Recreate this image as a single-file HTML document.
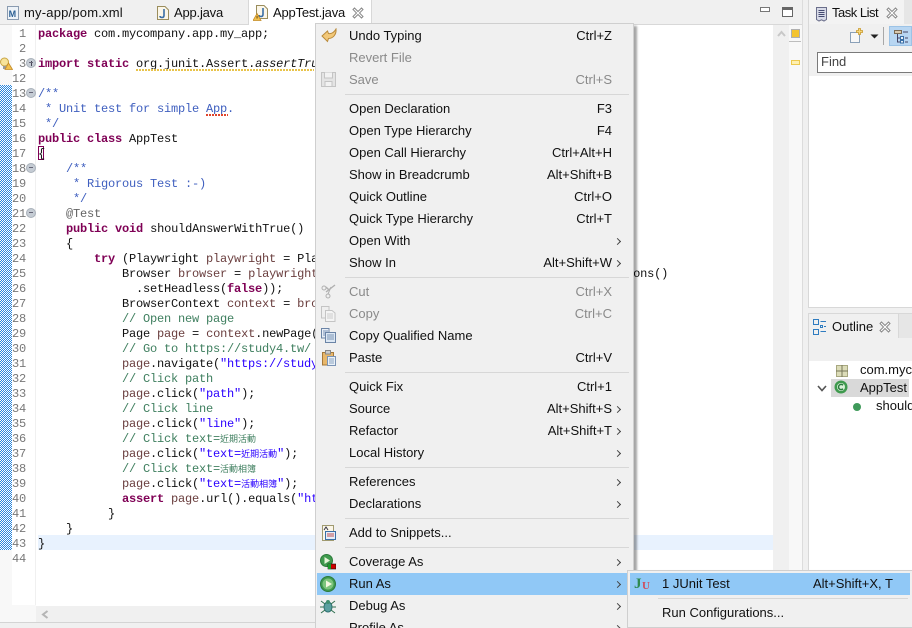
<!DOCTYPE html>
<html><head><meta charset="utf-8"><style>
html,body{margin:0;padding:0;width:912px;height:628px;overflow:hidden}
body{background:#f0f0f0;font-family:"Liberation Sans","Noto Sans CJK TC",sans-serif;font-size:13px;color:#111}
#root{position:absolute;left:0;top:0;width:912px;height:628px;overflow:hidden;background:#f0f0f0}
div,span.a,svg,i{position:absolute}
.t{position:absolute;white-space:pre;line-height:20px;height:20px}
#code{position:absolute;left:38px;top:27px;font:12px/15px "Liberation Mono","Noto Sans CJK TC",monospace;letter-spacing:-.2px;color:#111;white-space:pre;margin:0}
#nums{position:absolute;left:0;top:27px;width:26px;text-align:right;font:12px/15px "Liberation Mono",monospace;letter-spacing:-.2px;color:#787878;white-space:pre;margin:0}
b{color:#7f0055;font-weight:bold}
.j{color:#3f5fbf}.c{color:#3f7f5f}.s{color:#2a00ff}.v{color:#6a3e3e}.n{color:#646464}
.cjk{font-size:9px;letter-spacing:0;line-height:0}
.m{position:absolute;left:349px;line-height:22px;height:22px;white-space:pre}
.k{position:absolute;right:300px;line-height:22px;height:22px;white-space:pre}
.d{color:#8a8a8a}
.sep{position:absolute;left:345px;width:284px;height:1px;background:#d7d7d7}
i{width:4px;height:4px;left:615px;border-top:1px solid #444;border-right:1px solid #444;transform:rotate(45deg)}
.fold{width:8px;height:8px;left:26px;border-radius:50%;background:#c5ccd4;border:1px solid #a9b1ba}
.fold:after{content:"";position:absolute;left:2px;top:3px;width:4px;height:1px;background:#667}
</style></head><body><div id="root">

<!-- editor -->
<div style="left:0;top:0;width:802px;height:24px;background:#f0f0f0"></div>
<div style="left:248px;top:0;width:124px;height:25px;background:#fff;border-left:1px solid #d8d8d8;border-right:1px solid #d8d8d8;box-sizing:border-box"></div>
<div style="left:0;top:24px;width:248px;height:1px;background:#d8d8d8"></div>
<div style="left:372px;top:24px;width:430px;height:1px;background:#d8d8d8"></div>
<div style="left:0;top:25px;width:802px;height:581px;background:#fff"></div>
<div style="left:0;top:25px;width:12px;height:581px;background:#f8f8f8"></div>
<div style="left:35px;top:25px;width:1px;height:581px;background:#f0f0f0"></div>
<div style="left:0;top:605px;width:36px;height:17px;background:#f8f8f8"></div>
<svg style="left:0;top:85px;background:#fff" width="12" height="465" shape-rendering="crispEdges" stroke="#2a86dc" stroke-width="1" stroke-dasharray="1 1"><path d="M.5 0V465M2.5 0V465M4.5 0V465M6.5 0V465M8.5 0V465M10.5 0V465"/><path stroke-dashoffset="1" d="M1.5 0V465M3.5 0V465M5.5 0V465M7.5 0V465M9.5 0V465M11.5 0V465"/></svg>
<div style="left:38px;top:535px;width:735px;height:15px;background:#e8f2fe"></div>
<div style="left:38px;top:146px;width:6px;height:14px;border:1px solid #7f0055;box-sizing:border-box"></div>

<pre id="nums">1
2
3
12
13
14
15
16
17
18
19
20
21
22
23
24
25
26
27
28
29
30
31
32
33
34
35
36
37
38
39
40
41
42
43
44</pre>

<pre id="code"><b>package</b> com.mycompany.app.my_app;

<b>import</b> <b>static</b> org.junit.Assert.<em>assertTrue</em>;

<span class="j">/**</span>
<span class="j"> * Unit test for simple App.</span>
<span class="j"> */</span>
<b>public</b> <b>class</b> AppTest
{
    <span class="j">/**</span>
<span class="j">     * Rigorous Test :-)</span>
<span class="j">     */</span>
    <span class="n">@Test</span>
    <b>public</b> <b>void</b> shouldAnswerWithTrue()
    {
        <b>try</b> (Playwright <span class="v">playwright</span> = Playwright.create()) {
            Browser <span class="v">browser</span> = <span class="v">playwright</span>.chromium().launch(new BrowserType.LaunchOptions()
              .setHeadless(<b>false</b>));
            BrowserContext <span class="v">context</span> = <span class="v">browser</span>.newContext();
            <span class="c">// Open new page</span>
            Page <span class="v">page</span> = <span class="v">context</span>.newPage();
            <span class="c">// Go to https://study4.tw/</span>
            <span class="v">page</span>.navigate(<span class="s">"https://study4.tw/"</span>);
            <span class="c">// Click path</span>
            <span class="v">page</span>.click(<span class="s">"path"</span>);
            <span class="c">// Click line</span>
            <span class="v">page</span>.click(<span class="s">"line"</span>);
            <span class="c">// Click text=<span class="cjk">近期活動</span></span>
            <span class="v">page</span>.click(<span class="s">"text=<span class="cjk">近期活動</span>"</span>);
            <span class="c">// Click text=<span class="cjk">活動相簿</span></span>
            <span class="v">page</span>.click(<span class="s">"text=<span class="cjk">活動相簿</span>"</span>);
            <b>assert</b> <span class="v">page</span>.url().equals(<span class="s">"https://study4.tw/"</span>);
          }
    }
}
</pre>

<div class="fold" style="top:88px"></div>
<div class="fold" style="top:163px"></div>
<div class="fold" style="top:208px"></div>
<div class="fold" style="top:58px"><span style="position:absolute;left:3.5px;top:1.5px;width:1px;height:5px;background:#445"></span></div>

<!-- squiggles -->
<div style="left:136px;top:69px;width:178px;height:2px;background:repeating-linear-gradient(90deg,#e8c34a 0 2px,#fff 2px 3px)"></div>
<div style="left:206px;top:114px;width:22px;height:2px;background:repeating-linear-gradient(90deg,#e0452c 0 2px,#fff 2px 3px)"></div>

<!-- lightbulb marker -->
<svg style="left:0;top:57px" width="13" height="13" viewBox="0 0 13 13"><circle cx="4.5" cy="5" r="4" fill="#f7e39a" stroke="#c9a544"/><rect x="3" y="9" width="3" height="3" fill="#999"/><path d="M8.5 6 L12.5 12.5 H5 Z" fill="#f2c14e" stroke="#c48a25" stroke-width=".8"/></svg>

<!-- tabs -->
<svg style="left:7px;top:6px" width="12" height="14" viewBox="0 0 12 14"><path d="M.5.5H11.5V13.5H.5Z" fill="#eef3f8" stroke="#8a9bb0"/><text x="1.6" y="11" font-size="9" font-weight="bold" font-family="Liberation Sans" fill="#2b5f93">M</text></svg>
<div class="t" style="left:24px;top:3px;letter-spacing:.2px">my-app/pom.xml</div>
<svg style="left:157px;top:6px" width="12" height="14" viewBox="0 0 12 14"><path d="M.5.5H8L11.5 4V13.5H.5Z" fill="#fbf6e8" stroke="#9a8d5c"/><path d="M7 3V9.5Q7 11.5 5 11.5T3 10" fill="none" stroke="#3a6ea5" stroke-width="1.6"/></svg>
<div class="t" style="left:174px;top:3px;letter-spacing:-.2px">App.java</div>
<svg style="left:253px;top:5px" width="15" height="16" viewBox="0 0 15 16"><path d="M3.5.5H11L14.5 4V13.5H3.5Z" fill="#fbf6e8" stroke="#9a8d5c"/><path d="M10 3V9.5Q10 11.5 8 11.5T6 10" fill="none" stroke="#3a6ea5" stroke-width="1.6"/><path d="M4 8.5L8 15.5H0Z" fill="#f2c14e" stroke="#c48a25" stroke-width=".8"/><rect x="3.6" y="11" width=".9" height="2.5" fill="#5a3c00"/></svg>
<div class="t" style="left:273px;top:3px;letter-spacing:-.2px">AppTest.java</div>
<svg style="left:352px;top:7px" width="12" height="12" viewBox="0 0 12 12"><path d="M1 2.5L2.5 1L6 4.5L9.5 1L11 2.5L7.5 6L11 9.5L9.5 11L6 7.5L2.5 11L1 9.5L4.5 6Z" fill="#fff" stroke="#8a8a8a"/></svg>

<!-- window buttons -->
<div style="left:760px;top:7px;width:8px;height:3px;border:1px solid #777;background:#fff"></div>
<div style="left:782px;top:7px;width:9px;height:6px;border:1px solid #666;border-top-width:3px;background:#fff"></div>

<!-- editor scrollbars -->
<div style="left:773px;top:25px;width:16px;height:581px;background:#f0f0f0"></div>
<svg style="left:777px;top:30px" width="9" height="7" viewBox="0 0 9 7"><path d="M1 6L4.5 2L8 6" fill="none" stroke="#c8c8c8" stroke-width="2"/></svg>
<div style="left:789px;top:25px;width:13px;height:581px;background:#f8f8f8"></div>
<div style="left:791px;top:29px;width:7px;height:7px;background:#f4c430;border:1px solid #b0b0b0"></div>
<div style="left:789px;top:41px;width:12px;height:1px;background:#bdbdbd"></div>
<div style="left:791px;top:60px;width:7px;height:3px;background:#fff0b0;border:1px solid #ecc94f"></div>
<div style="left:36px;top:606px;width:766px;height:16px;background:#f0f0f0"></div>
<svg style="left:41px;top:610px" width="8" height="9" viewBox="0 0 8 9"><path d="M6.5 1L2 4.5L6.5 8" fill="none" stroke="#b5b5b5" stroke-width="2"/></svg>
<div style="left:0;top:622px;width:802px;height:1px;background:#d4d4d4"></div>
<div style="left:802px;top:0;width:1px;height:628px;background:#dcdcdc"></div>

<!-- right: task list -->
<div style="left:808px;top:0;width:104px;height:308px;background:#f0f0f0;border-left:1px solid #d8d8d8;border-bottom:1px solid #d8d8d8;box-sizing:border-box"></div>
<div style="left:809px;top:0;width:95px;height:24px;background:#f3f3f3"></div>
<div style="left:904px;top:0;width:8px;height:24px;background:#e6e6e6"></div>
<div style="left:809px;top:76px;width:103px;height:231px;background:#fff"></div>
<svg style="left:815px;top:6px" width="13" height="16" viewBox="0 0 13 16"><path d="M1.5 1.5H11.5V13.5L9 15L6.5 13.8L4 15L1.5 13.5Z" fill="#d8dbe8" stroke="#6a6e8a"/><path d="M3.5 4.5H9.5M3.5 6.5H9.5M3.5 8.5H9.5M3.5 10.5H9.5" stroke="#444a70"/></svg>
<div class="t" style="left:832px;top:3px;letter-spacing:-.5px">Task List</div>
<svg style="left:886px;top:7px" width="12" height="12" viewBox="0 0 12 12"><path d="M1 2.5L2.5 1L6 4.5L9.5 1L11 2.5L7.5 6L11 9.5L9.5 11L6 7.5L2.5 11L1 9.5L4.5 6Z" fill="#fff" stroke="#8a8a8a"/></svg>
<svg style="left:849px;top:28px" width="15" height="16" viewBox="0 0 15 16"><path d="M1.5 4.5H10.5V14.5H1.5Z" fill="#f7f7f7" stroke="#8aa0b8"/><path d="M9.5 0.5h2v2h2v2h-2v2h-2v-2h-2v-2h2Z" fill="#f6d77a" stroke="#c99a2e" stroke-width=".8"/></svg>
<svg style="left:870px;top:34px" width="9" height="5" viewBox="0 0 9 5"><path d="M.5.5H8.5L4.5 4.5Z" fill="#222"/></svg>
<div style="left:883px;top:27px;width:1px;height:18px;background:#a8a8a8"></div>
<div style="left:889px;top:26px;width:23px;height:20px;background:#b8d6f2;border:1px solid #9cc3e6;box-sizing:border-box"></div>
<svg style="left:893px;top:28px" width="16" height="16" viewBox="0 0 16 16"><path d="M1.5 2.5H8.5V5.5H1.5Z" fill="#d9c9b0" stroke="#7a6a55"/><path d="M4.5 6V14H7M4.5 10H7" fill="none" stroke="#446"/><path d="M7.5 8.5H10.5V11.5H7.5ZM7.5 12.5H10.5V15H7.5Z" fill="#e8f0f8" stroke="#3a6ea5"/><path d="M10 4H15M12 10H15M12 14H15" stroke="#446"/></svg>
<div style="left:817px;top:52px;width:96px;height:21px;background:#fff;border:1px solid #7a7a7a;box-sizing:border-box"></div>
<div class="t" style="left:821px;top:52px;color:#444">Find</div>

<!-- right: outline -->
<div style="left:808px;top:313px;width:104px;height:315px;background:#f0f0f0;border-left:1px solid #d8d8d8;border-top:1px solid #d8d8d8;box-sizing:border-box"></div>
<div style="left:898px;top:314px;width:14px;height:24px;background:#e6e6e6;border-left:1px solid #d8d8d8"></div>
<div style="left:809px;top:361px;width:103px;height:267px;background:#fff"></div>
<svg style="left:813px;top:319px" width="14" height="16" viewBox="0 0 14 16"><path d="M.5.5H5.5V5.5H.5ZM.5 10.5H5.5V15.5H.5ZM7.5 6.5H9.5V8.5H7.5ZM7.5 2.5H13M11 7.5H13M7.5 12.5H13" fill="none" stroke="#2f7cc0"/></svg>
<div class="t" style="left:832px;top:317px">Outline</div>
<svg style="left:879px;top:321px" width="12" height="12" viewBox="0 0 12 12"><path d="M1 2.5L2.5 1L6 4.5L9.5 1L11 2.5L7.5 6L11 9.5L9.5 11L6 7.5L2.5 11L1 9.5L4.5 6Z" fill="#fff" stroke="#8a8a8a"/></svg>
<svg style="left:836px;top:365px" width="12" height="12" viewBox="0 0 12 12"><rect x=".5" y=".5" width="11" height="11" fill="#dcdcb8" stroke="#a8a880"/><path d="M6 0V12M0 6H12" stroke="#77775a"/></svg>
<div class="t" style="left:860px;top:360px">com.mycompany.app.my_app</div>
<div style="left:831px;top:379px;width:78px;height:18px;background:#d9d9d9"></div>
<svg style="left:817px;top:385px" width="10" height="7" viewBox="0 0 10 7"><path d="M1 1L5 5.5L9 1" fill="none" stroke="#555" stroke-width="1.6"/></svg>
<svg style="left:834px;top:380px" width="14" height="14" viewBox="0 0 14 14"><circle cx="7" cy="7" r="6.5" fill="#3f9a4e"/><circle cx="7" cy="7" r="4" fill="#d8f0d8"/><path d="M9 5.2A2.6 2.6 0 1 0 9 8.8" fill="none" stroke="#2a7a3c" stroke-width="1.5"/></svg>
<div class="t" style="left:860px;top:378px">AppTest</div>
<div style="left:853px;top:403px;width:8px;height:8px;border-radius:50%;background:#3f9a5a;border:0"></div>
<div class="t" style="left:876px;top:396px">shouldAnswerWithTrue()</div>

<!-- context menu -->
<div style="left:315px;top:23px;width:319px;height:620px;background:#f0f0f0;border:1px solid #cfcfcf;box-sizing:border-box;box-shadow:3px 3px 2px rgba(0,0,0,.35)"></div>
<div style="left:317px;top:573px;width:310px;height:22px;background:#90c8f6"></div>

<div class="sep" style="top:94px"></div>
<div class="sep" style="top:277px"></div>
<div class="sep" style="top:372px"></div>
<div class="sep" style="top:467px"></div>
<div class="sep" style="top:518px"></div>
<div class="sep" style="top:547px"></div>

<span class="m" style="top:25px">Undo Typing</span><span class="k" style="top:25px">Ctrl+Z</span>
<span class="m d" style="top:47px">Revert File</span>
<span class="m d" style="top:69px">Save</span><span class="k d" style="top:69px">Ctrl+S</span>
<span class="m" style="top:98px">Open Declaration</span><span class="k" style="top:98px">F3</span>
<span class="m" style="top:120px">Open Type Hierarchy</span><span class="k" style="top:120px">F4</span>
<span class="m" style="top:142px">Open Call Hierarchy</span><span class="k" style="top:142px">Ctrl+Alt+H</span>
<span class="m" style="top:164px">Show in Breadcrumb</span><span class="k" style="top:164px">Alt+Shift+B</span>
<span class="m" style="top:186px">Quick Outline</span><span class="k" style="top:186px">Ctrl+O</span>
<span class="m" style="top:208px">Quick Type Hierarchy</span><span class="k" style="top:208px">Ctrl+T</span>
<span class="m" style="top:230px">Open With</span>
<span class="m" style="top:252px">Show In</span><span class="k" style="top:252px">Alt+Shift+W</span>
<span class="m d" style="top:281px">Cut</span><span class="k d" style="top:281px">Ctrl+X</span>
<span class="m d" style="top:303px">Copy</span><span class="k d" style="top:303px">Ctrl+C</span>
<span class="m" style="top:325px">Copy Qualified Name</span>
<span class="m" style="top:347px">Paste</span><span class="k" style="top:347px">Ctrl+V</span>
<span class="m" style="top:376px">Quick Fix</span><span class="k" style="top:376px">Ctrl+1</span>
<span class="m" style="top:398px">Source</span><span class="k" style="top:398px">Alt+Shift+S</span>
<span class="m" style="top:420px">Refactor</span><span class="k" style="top:420px">Alt+Shift+T</span>
<span class="m" style="top:442px">Local History</span>
<span class="m" style="top:471px">References</span>
<span class="m" style="top:493px">Declarations</span>
<span class="m" style="top:522px">Add to Snippets...</span>
<span class="m" style="top:551px">Coverage As</span>
<span class="m" style="top:573px">Run As</span>
<span class="m" style="top:595px">Debug As</span>
<span class="m" style="top:617px">Profile As</span>

<i style="top:239px"></i><i style="top:261px"></i><i style="top:407px"></i><i style="top:429px"></i><i style="top:451px"></i><i style="top:480px"></i><i style="top:502px"></i><i style="top:560px"></i><i style="top:582px"></i><i style="top:604px"></i><i style="top:626px"></i>

<!-- menu icons -->
<svg style="left:321px;top:28px" width="16" height="15" viewBox="0 0 16 15"><path d="M15 1C15.5 6 12.5 10.5 7.5 10.5L6.5 13.5L1 8L6.5 3L7.5 5.5C10.5 6 13 4.5 15 1Z" fill="#f2c879" stroke="#b98a3a"/></svg>
<svg style="left:321px;top:72px" width="15" height="15" viewBox="0 0 15 15"><path d="M.5.5H14.5V14.5H.5Z" fill="#e4e4e4" stroke="#c4c4c4"/><path d="M3.5.5V6H11.5V.5M4 14V9.5H11V14" fill="#f2f2f2" stroke="#c4c4c4"/></svg>
<svg style="left:321px;top:284px" width="15" height="15" viewBox="0 0 15 15"><path d="M14 1L5 8M8 6L5 3" stroke="#b0b0b0" stroke-width="1.4" fill="none"/><circle cx="3" cy="4" r="2" fill="none" stroke="#b0b0b0"/><circle cx="7" cy="12" r="2" fill="none" stroke="#b0b0b0"/><path d="M7 10L10 3" stroke="#b0b0b0"/></svg>
<svg style="left:321px;top:306px" width="15" height="16" viewBox="0 0 15 16"><path d="M.5.5H8V12H.5Z" fill="#efefef" stroke="#c4c4c4"/><path d="M4.5 4.5H11L14 7V15.5H4.5Z" fill="#f4f4f4" stroke="#c4c4c4"/><path d="M6 8H12M6 10H12M6 12H12" stroke="#ccc"/></svg>
<svg style="left:321px;top:328px" width="15" height="15" viewBox="0 0 15 15"><path d="M.5.5H8V10H.5Z" fill="#e8eef6" stroke="#6b84a6"/><path d="M2 3H7M2 5H7M2 7H7" stroke="#7a93b5"/><path d="M4.5 4.5H14.5V14.5H4.5Z" fill="#dde8f4" stroke="#6b84a6"/><path d="M6 7H13M6 9H13M6 11H13" stroke="#7a93b5"/></svg>
<svg style="left:322px;top:350px" width="14" height="16" viewBox="0 0 14 16"><path d="M.5 2.5H11.5V15H.5Z" fill="#e8b76a" stroke="#a5783a"/><rect x="3.5" y=".5" width="5" height="3.5" fill="#ccc" stroke="#888"/><path d="M5.5 6.5H13.5V15.5H5.5Z" fill="#eaf1f8" stroke="#7a93b5"/><path d="M7 9H12M7 11H12M7 13H12" stroke="#8aa2c0"/></svg>
<svg style="left:322px;top:525px" width="14" height="16" viewBox="0 0 14 16"><path d="M.5.5H11.5V15.5H.5Z" fill="#fbf6e8" stroke="#a09a70"/><rect x="3.5" y="6.5" width="10" height="8" fill="#e6eef8" stroke="#3a6ea5"/><path d="M5 9H12M5 11H12" stroke="#c05050"/><path d="M2 5L4 2L6 5" fill="none" stroke="#334"/></svg>
<svg style="left:320px;top:554px" width="16" height="16" viewBox="0 0 16 16"><circle cx="6.5" cy="6.5" r="6" fill="#3f9a4e" stroke="#2b7a3a"/><path d="M4.5 3L10 6.5L4.5 10Z" fill="#e6f4d8"/><rect x="8" y="10" width="8" height="5" fill="#c00" stroke="#111" stroke-width=".6"/><rect x="8" y="10" width="3" height="5" fill="#1a9a2a"/></svg>
<svg style="left:320px;top:576px" width="16" height="16" viewBox="0 0 16 16"><circle cx="8" cy="8" r="7.5" fill="#3f9a4e" stroke="#2b7a3a"/><circle cx="8" cy="8" r="5.5" fill="#7cc47c"/><path d="M6 4.5L12 8L6 11.5Z" fill="#f4f8e0"/></svg>
<svg style="left:320px;top:598px" width="16" height="16" viewBox="0 0 16 16"><ellipse cx="8" cy="9" rx="4" ry="5" fill="#5aa0a0" stroke="#2f6f70"/><circle cx="8" cy="4" r="2" fill="#3f8f70"/><path d="M1 3L5 6M15 3L11 6M0 9H4M16 9H12M1 15L5 12M15 15L11 12" stroke="#2f6f50"/></svg>

<!-- submenu -->
<div style="left:627px;top:570px;width:290px;height:58px;background:#f0f0f0;border:1px solid #cfcfcf;box-sizing:border-box;box-shadow:2px 2px 2px rgba(0,0,0,.35)"></div>
<div style="left:630px;top:573px;width:280px;height:22px;background:#90c8f6"></div>
<div style="left:658px;top:598px;width:250px;height:1px;background:#d7d7d7"></div>
<span style="position:absolute;left:634px;top:574px;font:bold 15px/20px 'Liberation Serif',serif;color:#2f8a50">J</span>
<span style="position:absolute;left:642px;top:576px;font:bold 11px/20px 'Liberation Serif',serif;color:#d04a5a">U</span>
<span class="m" style="left:662px;top:573px">1 JUnit Test</span>
<span class="m" style="left:813px;top:573px">Alt+Shift+X, T</span>
<span class="m" style="left:662px;top:602px">Run Configurations...</span>

</div></body></html>
